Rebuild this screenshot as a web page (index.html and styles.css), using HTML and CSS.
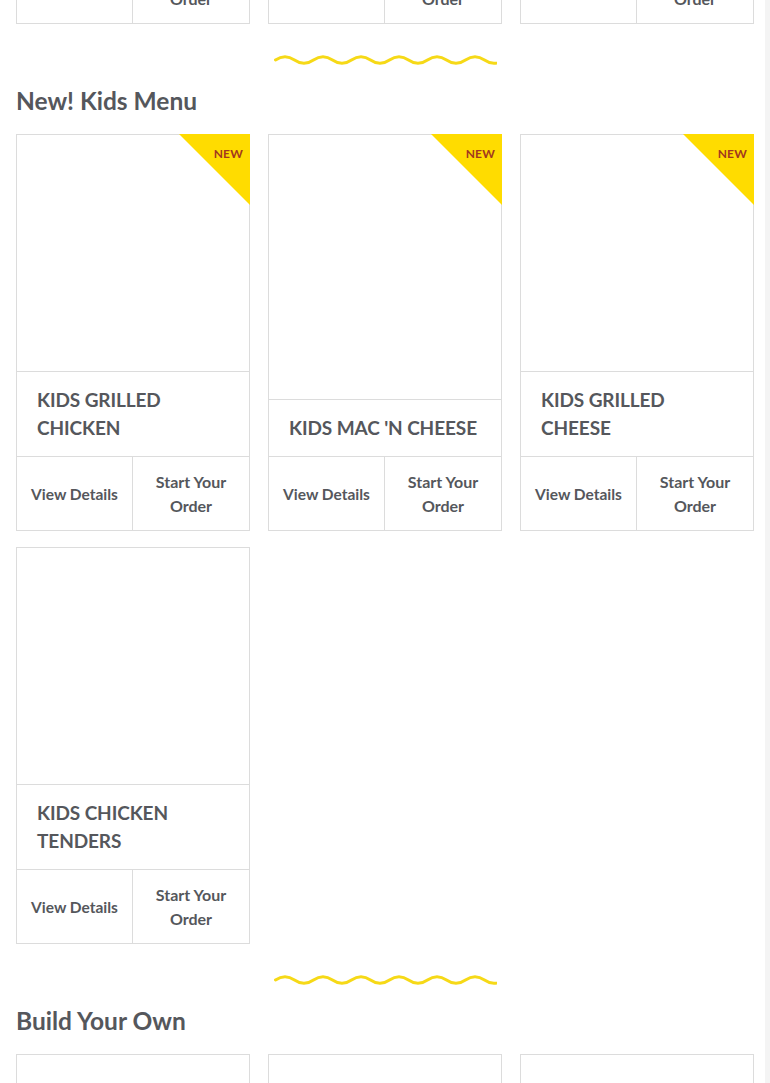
FILE: index.html
```html
<!DOCTYPE html>
<html lang="en">
<head>
<meta charset="utf-8">
<title>Menu</title>
<link rel="stylesheet" href="styles.css">
</head>
<body>
<main class="page">
  <div class="grid prev-row">
    <div class="card card-tail">
      <div class="actions">
        <a class="btn">View Details</a>
        <a class="btn">Start Your Order</a>
      </div>
    </div>
    <div class="card card-tail">
      <div class="actions">
        <a class="btn">View Details</a>
        <a class="btn">Start Your Order</a>
      </div>
    </div>
    <div class="card card-tail">
      <div class="actions">
        <a class="btn">View Details</a>
        <a class="btn">Start Your Order</a>
      </div>
    </div>
  </div>

  <section class="section">
    <div class="divider">
      <svg class="wave" width="223" height="12" viewBox="0 0 223 12" aria-hidden="true">
        <path d="M1.5 6 Q11 -0.6 20.5 6 T39.5 6 T58.5 6 T77.5 6 T96.5 6 T115.5 6 T134.5 6 T153.5 6 T172.5 6 T191.5 6 T210.5 6 T229.5 6" />
      </svg>
    </div>
    <h2 class="section-title">New! Kids Menu</h2>
    <div class="grid">
      <article class="card">
        <span class="badge"><span class="badge-text">NEW</span></span>
        <div class="card-media"></div>
        <h3 class="card-title">KIDS GRILLED CHICKEN</h3>
        <div class="actions">
          <a class="btn">View Details</a>
          <a class="btn">Start Your Order</a>
        </div>
      </article>
      <article class="card">
        <span class="badge"><span class="badge-text">NEW</span></span>
        <div class="card-media"></div>
        <h3 class="card-title">KIDS MAC 'N CHEESE</h3>
        <div class="actions">
          <a class="btn">View Details</a>
          <a class="btn">Start Your Order</a>
        </div>
      </article>
      <article class="card">
        <span class="badge"><span class="badge-text">NEW</span></span>
        <div class="card-media"></div>
        <h3 class="card-title">KIDS GRILLED CHEESE</h3>
        <div class="actions">
          <a class="btn">View Details</a>
          <a class="btn">Start Your Order</a>
        </div>
      </article>
      <article class="card">
        <div class="card-media"></div>
        <h3 class="card-title">KIDS CHICKEN TENDERS</h3>
        <div class="actions">
          <a class="btn">View Details</a>
          <a class="btn">Start Your Order</a>
        </div>
      </article>
    </div>
  </section>

  <section class="section">
    <div class="divider">
      <svg class="wave" width="223" height="12" viewBox="0 0 223 12" aria-hidden="true">
        <path d="M1.5 6 Q11 -0.6 20.5 6 T39.5 6 T58.5 6 T77.5 6 T96.5 6 T115.5 6 T134.5 6 T153.5 6 T172.5 6 T191.5 6 T210.5 6 T229.5 6" />
      </svg>
    </div>
    <h2 class="section-title">Build Your Own</h2>
    <div class="grid">
      <article class="card">
        <div class="card-media"></div>
        <h3 class="card-title">BUILD YOUR OWN</h3>
        <div class="actions">
          <a class="btn">View Details</a>
          <a class="btn">Start Your Order</a>
        </div>
      </article>
      <article class="card">
        <div class="card-media"></div>
        <h3 class="card-title">BUILD YOUR OWN</h3>
        <div class="actions">
          <a class="btn">View Details</a>
          <a class="btn">Start Your Order</a>
        </div>
      </article>
      <article class="card">
        <div class="card-media"></div>
        <h3 class="card-title">BUILD YOUR OWN</h3>
        <div class="actions">
          <a class="btn">View Details</a>
          <a class="btn">Start Your Order</a>
        </div>
      </article>
    </div>
  </section>
</main>
</body>
</html>
```

FILE: styles.css
```css
html {
  background: linear-gradient(to right, #ffffff 765px, #f4f4f4 765px);
  min-height: 100%;
}

body {
  margin: 0;
  font-family: Lato, "Open Sans", "Liberation Sans", sans-serif;
  color: #55575c;
  overflow: hidden;
}

.page {
  width: 738px;
  padding: 0 16px;
}

.grid {
  display: grid;
  grid-template-columns: repeat(3, 234px);
  column-gap: 18px;
  row-gap: 16px;
  align-items: stretch;
}

.prev-row {
  margin-top: -51px;
}

.card {
  position: relative;
  display: flex;
  flex-direction: column;
  border: 1px solid #dcdcdc;
  background: #fff;
}

.card-media {
  flex: 1 0 236px;
  min-height: 236px;
}

.card-title {
  margin: 0;
  padding: 14px 19px 14px 20px;
  border-top: 1px solid #dcdcdc;
  font-size: 19px;
  line-height: 28px;
  font-weight: 700;
  color: #55575c;
  letter-spacing: -0.1px;
}

.actions {
  display: grid;
  grid-template-columns: 116px 1fr;
  height: 73px;
  border-top: 1px solid #dcdcdc;
}

.card-tail .actions {
  border-top: none;
}

.btn {
  display: flex;
  align-items: center;
  justify-content: center;
  text-align: center;
  padding: 0 18px;
  font-size: 16px;
  line-height: 24px;
  font-weight: 700;
  color: #55575c;
  cursor: pointer;
}

.btn:first-child {
  border-right: 1px solid #dcdcdc;
  padding: 0 4px;
  font-size: 15.5px;
}

.badge {
  position: absolute;
  top: -1px;
  right: -1px;
  width: 71px;
  height: 71px;
  background: #ffdc00;
  clip-path: polygon(0 0, 100% 0, 100% 100%);
}

.badge-text {
  position: absolute;
  top: 13px;
  right: 7px;
  font-size: 12px;
  line-height: 14px;
  font-weight: 700;
  color: #a2381f;
  letter-spacing: 0.2px;
}

.divider {
  display: flex;
  justify-content: center;
  margin-top: 30px;
  height: 12px;
}

.wave {
  display: block;
  overflow: hidden;
}

.wave path {
  fill: none;
  stroke: #f6d917;
  stroke-width: 3;
  stroke-linecap: round;
}

.section-title {
  margin: 19px 0 17px;
  font-size: 24.5px;
  line-height: 32px;
  font-weight: 700;
  color: #55575c;
}
```
